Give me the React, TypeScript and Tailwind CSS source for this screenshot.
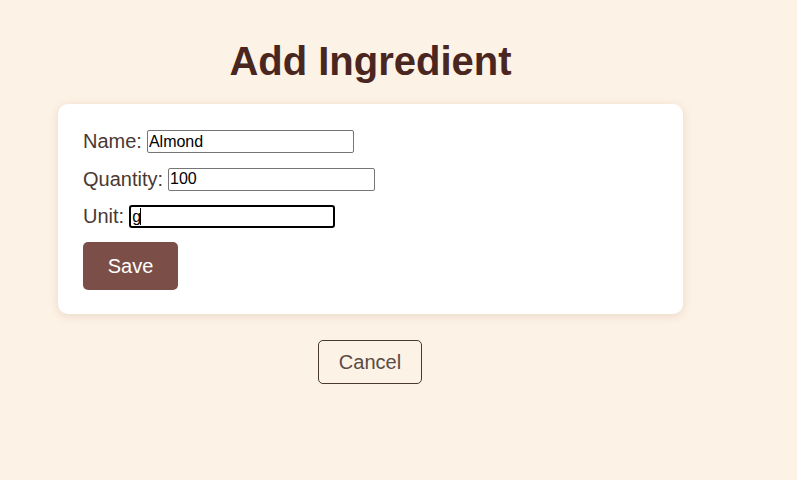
import React from "react";

function Field({ label, value, focused }: { label: string; value: string; focused?: boolean }) {
  return (
    <div className="flex h-[23px] items-center gap-[5px] text-[20px] leading-[23px] text-[#4a3832]">
      <span>{label}</span>
      <div className="relative">
        <input
          type="text"
          defaultValue={value}
          className={
            focused
              ? "block h-[23px] w-[206px] rounded-[3px] border-2 border-black bg-white px-[1px] text-[16px] leading-[19px] text-black outline-none"
              : "block h-[23px] w-[207px] rounded-[2px] border border-[#767676] bg-white px-[1px] text-[16px] leading-[21px] text-black outline-none"
          }
          style={{ fontFamily: '"Liberation Sans", Arial, sans-serif' }}
        />
        {focused && <span className="absolute left-[11px] top-[3px] h-[17px] w-px bg-black" />}
      </div>
    </div>
  );
}

export default function App() {
  return (
    <div
      className="min-h-[480px] w-full bg-[#fdf2e6] pt-[38px]"
      style={{ fontFamily: '"Liberation Sans", Arial, sans-serif' }}
    >
      <div className="ml-[58px] w-[625px]">
        <h1 className="mb-[20px] text-center text-[40px] font-bold leading-[46px] text-[#4a2620]">
          Add Ingredient
        </h1>
        <div className="rounded-[10px] bg-white px-[25px] pb-[24px] pt-[26px] shadow-[0_2px_10px_rgba(120,80,40,0.15)]">
          <div className="flex flex-col gap-[14.5px]">
            <Field label="Name:" value="Almond" />
            <Field label="Quantity:" value="100" />
            <Field label="Unit:" value="g" focused />
          </div>
          <button className="mt-[14px] h-[48px] w-[95px] rounded-[5px] bg-[#7b4f47] text-[20px] text-white">
            Save
          </button>
        </div>
        <div className="mt-[26px] flex justify-center pr-[1px]">
          <button className="h-[44px] w-[104px] rounded-[5px] border border-[#4a3832] text-[20px] text-[#5a4a44]">
            Cancel
          </button>
        </div>
      </div>
    </div>
  );
}
